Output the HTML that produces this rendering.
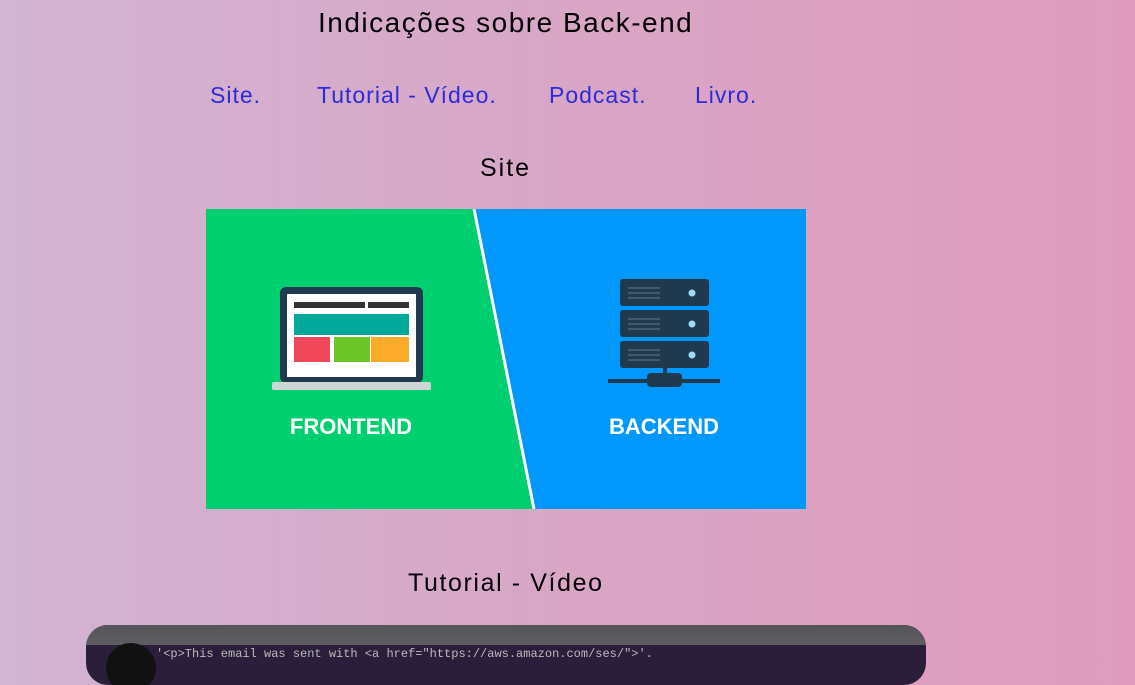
<!DOCTYPE html>
<html><head><meta charset="utf-8"><style>
html,body{margin:0;padding:0}
body{width:1135px;height:663px;overflow:hidden;background:linear-gradient(90deg,#d2b4d3 0%,#d9a6c6 50%,#df9bbc 100%);font-family:"Comic Sans MS","Liberation Sans",sans-serif;position:relative}
.t{position:absolute;color:#000;white-space:nowrap}
.a{position:absolute;color:#2b2bd9;font-size:23px;top:82px;white-space:nowrap;letter-spacing:1px}
</style></head><body>
<div class="t" style="left:318px;top:7px;font-size:28px;letter-spacing:1.5px">Indicações sobre Back-end</div>
<div class="a" style="left:210px">Site.</div>
<div class="a" style="left:317px">Tutorial - Vídeo.</div>
<div class="a" style="left:549px">Podcast.</div>
<div class="a" style="left:695px">Livro.</div>
<div class="t" style="left:480px;top:154px;font-size:25px;letter-spacing:2px">Site</div>
<svg style="position:absolute;left:206px;top:209px" width="600" height="300" viewBox="0 0 600 300">
<rect width="600" height="300" fill="#0098fd"/>
<polygon points="0,0 267,0 327,300 0,300" fill="#00cf70"/>
<line x1="268" y1="0" x2="328" y2="300" stroke="#fff" stroke-width="3"/>
<rect x="74" y="78" width="143" height="96" rx="6" fill="#1f3a4f"/>
<rect x="81" y="85" width="129" height="83" fill="#fff"/>
<rect x="88" y="93" width="71" height="6" fill="#333"/><rect x="162" y="93" width="41" height="6" fill="#333"/>
<rect x="88" y="105" width="115" height="21" fill="#00a99a"/>
<rect x="88" y="128" width="36" height="25" fill="#f0485a"/><rect x="128" y="128" width="36" height="25" fill="#6dc52a"/><rect x="165" y="128" width="38" height="25" fill="#fdab2b"/>
<rect x="66" y="173" width="159" height="8" rx="2" fill="#cfd6d8"/>
<rect x="414" y="70" width="89" height="27" rx="3" fill="#1f3a4f"/>
<rect x="414" y="101" width="89" height="27" rx="3" fill="#1f3a4f"/>
<rect x="414" y="132" width="89" height="27" rx="3" fill="#1f3a4f"/>
<g fill="#9fd8f8"><circle cx="486" cy="84" r="3.5"/><circle cx="486" cy="115" r="3.5"/><circle cx="486" cy="146" r="3.5"/></g>
<g stroke="#4a6274" stroke-width="1.5"><path d="M422 79h32M422 84h32M422 89h32M422 110h32M422 115h32M422 120h32M422 141h32M422 146h32M422 151h32"/></g>
<rect x="457" y="159" width="4" height="8" fill="#1f3a4f"/>
<rect x="402" y="170" width="112" height="4" fill="#1f3a4f"/>
<rect x="441" y="164" width="35" height="14" rx="4" fill="#1f3a4f"/>
<text x="145" y="225" fill="#fff" font-family="Liberation Sans,sans-serif" font-weight="bold" font-size="22" text-anchor="middle">FRONTEND</text>
<text x="458" y="225" fill="#fff" font-family="Liberation Sans,sans-serif" font-weight="bold" font-size="22" text-anchor="middle">BACKEND</text>
</svg>
<div class="t" style="left:408px;top:569px;font-size:25px;letter-spacing:1.6px">Tutorial - Vídeo</div>
<div style="position:absolute;left:86px;top:625px;width:840px;height:60px;border-radius:22px;overflow:hidden;background:#2a1e3a">
<div style="height:20px;background:linear-gradient(#555458,#5e5d62)"></div>
<div style="position:absolute;left:70px;top:22px;font-family:'Liberation Mono',monospace;font-size:12px;color:#bbb;white-space:nowrap">'&lt;p&gt;This email was sent with &lt;a href="https://aws.amazon.com/ses/"&gt;'.</div>
<div style="position:absolute;left:20px;top:18px;width:50px;height:50px;border-radius:50%;background:#111"></div>
</div>
</body></html>
